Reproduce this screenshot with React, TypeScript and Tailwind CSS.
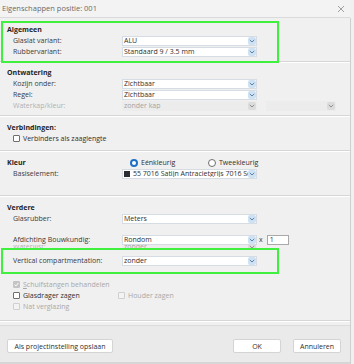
import React from "react";

const Arrow = ({ disabled }: { disabled?: boolean }) => (
  <span
    className={`mr-[0px] flex h-[8px] w-[8px] shrink-0 items-center justify-center rounded-[2px] ${
      disabled ? "bg-[#dcdcdc]" : "bg-[#cfe2f3]"
    }`}
  >
    <svg width="6" height="4" viewBox="0 0 6 4">
      <path
        d="M0.8 0.9 L3 3 L5.2 0.9"
        fill="none"
        stroke={disabled ? "#8f8f8f" : "#5a80a8"}
        strokeWidth="1"
      />
    </svg>
  </span>
);

const Select = ({
  value,
  disabled,
  swatch,
  wide,
}: {
  value?: string;
  disabled?: boolean;
  swatch?: boolean;
  wide?: boolean;
}) => (
  <div
    className={`flex h-[10px] items-center border pr-[0px] ${wide ? "w-[70px]" : "w-[135px]"} ${
      disabled ? "border-transparent bg-[#ececec] text-[#a3a3a3]" : "border-[#d6dce3] bg-white text-[#2f2f2f]"
    }`}
  >
    {swatch && <span className="ml-[1px] mr-[2px] h-[6px] w-[6px] shrink-0 bg-[#2a2e33]" />}
    <span className="flex-1 overflow-hidden whitespace-nowrap pl-[1px] leading-none">{value}</span>
    <Arrow disabled={disabled} />
  </div>
);

const Row = ({
  label,
  disabled,
  children,
}: {
  label: string;
  disabled?: boolean;
  children?: React.ReactNode;
}) => (
  <div className="flex h-[11px] items-center">
    <div className={`w-[115px] shrink-0 pl-[6px] leading-none ${disabled ? "text-[#b0b0b0]" : "text-[#3a3a3a]"}`}>
      {label}
    </div>
    {children}
  </div>
);

const Header = ({ children }: { children: React.ReactNode }) => (
  <div className="flex h-[11px] items-center font-bold leading-none text-[#1f1f1f]">{children}</div>
);

const Separator = () => <div className="h-[2px] w-full border-t border-b border-t-[#d6d6d6] border-b-white" />;

const Checkbox = ({
  label,
  disabled,
  checked,
  underline,
}: {
  label: string;
  disabled?: boolean;
  checked?: boolean;
  underline?: boolean;
}) => (
  <div className="flex items-center gap-[3px]">
    <span
      className={`flex h-[7px] w-[7px] items-center justify-center rounded-[1px] border ${
        checked ? "border-[#c4c4c4] bg-[#c4c4c4]" : disabled ? "border-[#cfcfcf] bg-[#f3f3f3]" : "border-[#6f6f6f] bg-white"
      }`}
    >
      {checked && (
        <svg width="5" height="5" viewBox="0 0 5 5">
          <path d="M0.6 2.6 L2 3.9 L4.4 1" fill="none" stroke="white" strokeWidth="1" />
        </svg>
      )}
    </span>
    <span className={`leading-none ${disabled ? "text-[#a8a8a8]" : "text-[#2f2f2f]"}`}>
      {underline ? (
        <>
          <span className="underline">{label[0]}</span>
          {label.slice(1)}
        </>
      ) : (
        label
      )}
    </span>
  </div>
);

const Radio = ({ label, checked }: { label: string; checked?: boolean }) => (
  <div className="flex items-center gap-[3px]">
    <span
      className={`h-[8px] w-[8px] rounded-full ${
        checked ? "border-[2px] border-[#1f6fc5] bg-white" : "border border-[#6f6f6f] bg-white"
      }`}
    />
    <span className="leading-none text-[#2f2f2f]">{label}</span>
  </div>
);

const Button = ({ children, wide }: { children: React.ReactNode; wide?: boolean }) => (
  <div
    className={`flex h-[14px] items-center justify-center rounded-[2px] border border-[#d4d4d4] bg-white leading-none text-[#2f2f2f] ${
      wide ? "w-[106px]" : "w-[48px]"
    }`}
  >
    {children}
  </div>
);

export default function App() {
  return (
    <div className="flex h-[364px] w-[354px] flex-col overflow-hidden bg-[#f0f0f0] font-['Open_Sans',sans-serif] text-[7px]">
      {/* titelbalk */}
      <div className="flex h-[18px] w-[350px] shrink-0 items-center justify-between border-b border-[#dadada] bg-[#f3f3f3] pl-[2px] pr-[5px]">
        <span className="text-[7.5px] leading-none text-[#6a6a6a]">Eigenschappen positie: 001</span>
        <svg width="8" height="8" viewBox="0 0 8 8">
          <path d="M1 1 L7 7 M7 1 L1 7" stroke="#8a8a8a" strokeWidth="0.8" />
        </svg>
      </div>

      <div className="flex w-[351px] flex-1 flex-col border-r border-[#cfcfcf]">
        {/* Algemeen */}
        <div className="relative z-10 ml-[1px] mt-[3px] h-[42px] w-[278px] border-2 border-[#3ff03f] pl-[4px] pt-[1px]">
          <Header>Algemeen</Header>
          <Row label="Glaslat variant:">
            <Select value="ALU" />
          </Row>
          <Row label="Rubbervariant:">
            <Select value="Standaard 9 / 3.5 mm" />
          </Row>
        </div>
        <div className="-mt-[2px]">
          <Separator />
        </div>

        {/* Ontwatering */}
        <div className="pb-[4px] pl-[7px] pt-[4px]">
          <Header>Ontwatering</Header>
          <Row label="Kozijn onder:">
            <Select value="Zichtbaar" />
          </Row>
          <Row label="Regel:">
            <Select value="Zichtbaar" />
          </Row>
          <Row label="Waterkap/kleur:" disabled>
            <Select value="zonder kap" disabled />
            <div className="ml-[9px]">
              <Select disabled wide />
            </div>
          </Row>
        </div>
        <Separator />

        {/* Verbindingen */}
        <div className="pb-[6px] pl-[7px] pt-[5px]">
          <Header>Verbindingen:</Header>
          <div className="flex h-[11px] items-center pl-[6px]">
            <Checkbox label="Verbinders als zaaglengte" />
          </div>
        </div>
        <Separator />

        {/* Kleur */}
        <div className="pb-[16px] pl-[7px] pt-[5px]">
          <div className="flex h-[11px] items-center">
            <div className="w-[121px] font-bold leading-none text-[#1f1f1f]">Kleur</div>
            <div className="ml-[2px] w-[78px]">
              <Radio label="Eénkleurig" checked />
            </div>
            <Radio label="Tweekleurig" />
          </div>
          <Row label="Basiselement:">
            <Select value="55 7016 Satijn Antracietgrijs 7016 Se" swatch />
          </Row>
        </div>
        <Separator />

        {/* Verdere */}
        <div className="pl-[7px] pt-[5px]">
          <Header>Verdere</Header>
          <Row label="Glasrubber:">
            <Select value="Meters" />
          </Row>
          <div className="h-[10px]" />
          <Row label="Afdichting Bouwkundig:">
            <Select value="Rondom" />
            <span className="ml-[2px] leading-none text-[#3a3a3a]">x</span>
            <div className="ml-[4px] flex h-[10px] w-[22px] items-center border border-[#a9a9a9] bg-white pl-[2px] leading-none text-[#2f2f2f]">
              1
            </div>
          </Row>
          <div className="h-[3px] overflow-hidden">
            <div className="-mt-[4px]">
              <Row label="Waterlijst:" disabled>
                <Select value="zonder" disabled />
              </Row>
            </div>
          </div>
        </div>
        <div className="relative z-10 ml-[1px] h-[26px] w-[278px] border-2 border-[#3ff03f] bg-[#f0f0f0] pl-[4px] pt-[5px]">
          <Row label="Vertical compartmentation:">
            <Select value="zonder" />
          </Row>
        </div>
        <div className="pb-[8px] pl-[13px] pt-[5px]">
          <div className="flex h-[11px] items-center">
            <Checkbox label="Schuifstangen behandelen" disabled checked underline />
          </div>
          <div className="flex h-[11px] items-center">
            <div className="w-[105px]">
              <Checkbox label="Glasdrager zagen" />
            </div>
            <Checkbox label="Houder zagen" disabled />
          </div>
          <div className="flex h-[11px] items-center">
            <Checkbox label="Nat verglazing" disabled />
          </div>
        </div>
        <Separator />

        {/* knoppen */}
        <div className="mt-[3px] flex flex-1 items-start border-t border-[#dcdcdc] bg-[#eaeaea] pl-[7px] pr-[9px] pt-[13px]">
          <Button wide>Als projectinstelling opslaan</Button>
          <div className="ml-auto flex gap-[12px]">
            <Button>OK</Button>
            <Button>Annuleren</Button>
          </div>
        </div>
        <div className="h-[2px] bg-[#d6d6d6]" />
      </div>
    </div>
  );
}
